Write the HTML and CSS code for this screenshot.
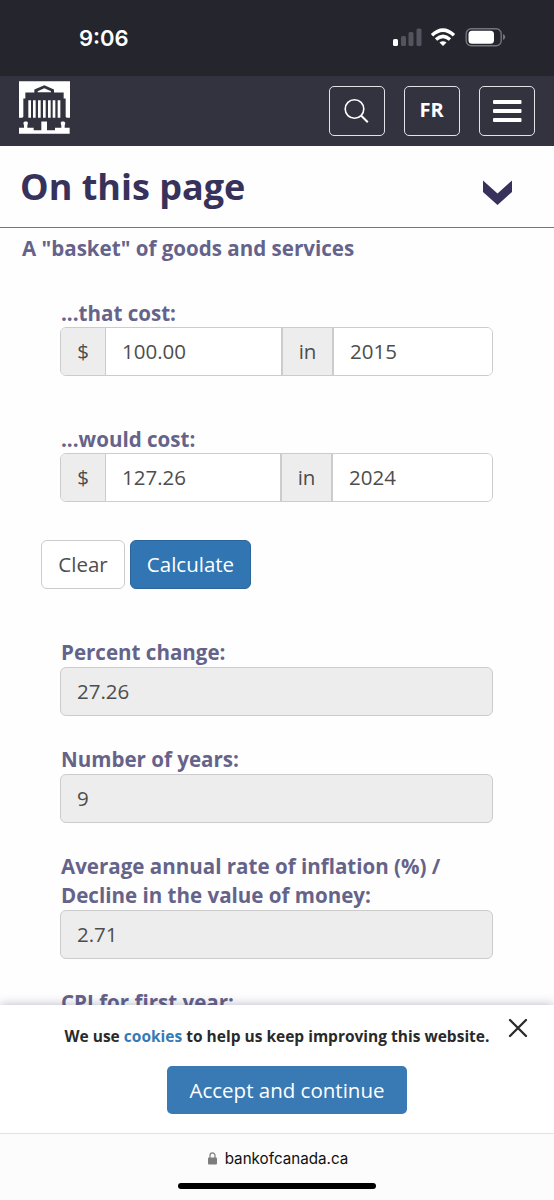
FILE: index.html
```html
<!doctype html>
<html lang="en">

<head>
    <meta charset="UTF-8" />
    <meta name="viewport" content="width=device-width, initial-scale=1.0" />
    <title>Inflation Calculator - Bank of Canada</title>
    <link rel="stylesheet" href="styles.css">
</head>

<body>
    <div class="status-bar">
        <span class="clock">9:06</span>
        <svg class="status-icons" width="114" height="20" viewBox="0 0 114 20">
            <g fill="#fff">
                <rect x="1" y="11" width="5" height="7" rx="1.5" />
                <g fill="#54545e">
                    <rect x="9" y="8" width="5" height="10" rx="1.5" />
                    <rect x="16.5" y="4" width="5" height="14" rx="1.5" />
                    <rect x="24.500" y="0.500" width="5" height="17.500" rx="1.5" />
                </g>
                <path d="M51 18l-3.500-3.500q3.500-2.700 7 0z" />
            </g>
            <g fill="none" stroke="#fff" stroke-width="3.400">
                <path d="M40 7.300q11-10.300 22 0" />
                <path d="M44 11.600q7-6.400 14 0" />
            </g>
            <rect x="74.200" y="0.700" width="35" height="17" rx="5" fill="none" stroke="#74747d" stroke-width="1.400" />
            <rect x="76.500" y="2.700" width="25.500" height="13" rx="3.500" fill="#fff" />
            <path d="M111 6q2.300 1 2.300 3t-2.300 3z" fill="#74747d" />
        </svg>
    </div>

    <header class="site-header">
        <svg class="logo" width="51" height="53" viewBox="0 0 153 158">
            <path fill="#fff" d="M0 0h153v110h-10l-3-3V52h-6V34h-29v-9L76 12 46 25v9H19v18h-6v55l-3 3H0z" />
            <path fill="#fff" d="M56 30l20-9 20 9v3H56z" />
            <path fill="#fff" d="M28 57h8v53h-8zM42 57h8v53h-8zM57 57h8v53h-8zM72 57h8v53h-8zM87 57h8v53h-8zM101 57h8v53h-8zM116 57h8v53h-8z" />
            <path fill="#fff" d="M0 140h15v-6l-2-9 4-4h7l3 4-2 9v6h19v7h23v-26h17v26h24v-7h19v-6l-2-9 3-4h7l4 4-2 9v6h15v18H0z" />
        </svg>
        <nav class="header-buttons">
            <button class="header-btn" aria-label="Search">
                <svg width="26" height="26" viewBox="0 0 26 26" fill="none" stroke="#fff" stroke-width="1.600">
                    <circle cx="10.500" cy="11" r="9.300" />
                    <path d="M17 17.500l6.800 6.800" stroke-width="2" />
                </svg>
            </button>
            <button class="header-btn lang">FR</button>
            <button class="header-btn" aria-label="Menu">
                <svg width="30" height="24" viewBox="0 0 30 24" fill="#fff">
                    <rect x="1" y="1" width="28.500" height="4" rx="1" />
                    <rect x="1" y="10" width="28.500" height="4" rx="1" />
                    <rect x="1" y="19" width="28.500" height="4" rx="1" />
                </svg>
            </button>
        </nav>
    </header>

    <div class="page-nav">
        <h2>On this page</h2>
        <svg width="30" height="25" viewBox="0 0 30 25">
            <path fill="#37325c" d="M1 0.500l14.500 13L30 0.500v11.500L15.500 25 1 12z" />
        </svg>
    </div>

    <main class="calculator">
        <h3>A "basket" of goods and services</h3>

        <div class="field cost">
            <label for="from-cost">...that cost:</label>
            <div class="input-group first">
                <span class="addon">$</span>
                <input id="from-cost" type="text" value="100.00">
                <span class="addon in">in</span>
                <input class="year" type="text" value="2015">
            </div>
        </div>

        <div class="field cost">
            <label for="to-cost">...would cost:</label>
            <div class="input-group second">
                <span class="addon">$</span>
                <input id="to-cost" type="text" value="127.26">
                <span class="addon in">in</span>
                <input class="year" type="text" value="2024">
            </div>
        </div>

        <div class="actions">
            <button class="btn">Clear</button>
            <button class="btn primary">Calculate</button>
        </div>

        <div class="field result">
            <label for="percent">Percent change:</label>
            <input id="percent" type="text" value="27.26" readonly>
        </div>
        <div class="field result">
            <label for="years">Number of years:</label>
            <input id="years" type="text" value="9" readonly>
        </div>
        <div class="field result">
            <label for="rate">Average annual rate of inflation (%) /<br>Decline in the value of money:</label>
            <input id="rate" type="text" value="2.71" readonly>
        </div>
        <div class="field result">
            <label for="cpi">CPI for first year:</label>
        </div>
    </main>

    <div class="cookie-bar">
        <p>We use <a>cookies</a> to help us keep improving this website.</p>
        <button class="accept">Accept and continue</button>
        <svg class="close" width="20" height="20" viewBox="0 0 20 20" stroke="#2a2a2a" stroke-width="2.300" stroke-linecap="round">
            <path d="M2 2l16 16M18 2L2 18" />
        </svg>
    </div>

    <footer class="browser-bar">
        <div class="address">
            <svg width="9" height="13" viewBox="0 0 9 13">
                <rect x="0" y="5.500" width="9" height="7" rx="1" fill="#7d7d7d" />
                <path d="M2 6V3.500a2.500 2.700 0 0 1 5 0V6" fill="none" stroke="#7d7d7d" stroke-width="1.200" />
            </svg>
            <span>bankofcanada.ca</span>
        </div>
        <div class="home-indicator"></div>
    </footer>
</body>

</html>
```
FILE: styles.css
```css
* {
    box-sizing: border-box;
}

body {
    margin: 0;
    height: 1200px;
    display: flex;
    flex-direction: column;
    overflow: hidden;
    background: #fefefe;
    font-family: "Open Sans", sans-serif;
    font-size: 20.5px;
    color: #4d4d4d;
}

button,
input {
    font-family: inherit;
    font-size: inherit;
    color: inherit;
}

.status-bar {
    flex: none;
    display: flex;
    justify-content: space-between;
    height: 76px;
    padding: 28px 48px 0 79px;
    background: #25252e;
}

.clock {
    font-family: Inter, sans-serif;
    font-size: 22px;
    font-weight: 600;
    line-height: 20px;
    color: #fff;
}

.site-header {
    flex: none;
    display: flex;
    justify-content: space-between;
    height: 70px;
    padding: 5px 19px 0;
    background: #33333f;
}

.header-buttons {
    display: flex;
    gap: 19px;
    padding-top: 5px;
}

.header-btn {
    display: flex;
    align-items: center;
    justify-content: center;
    width: 56px;
    height: 50px;
    padding: 0;
    border: 1.5px solid #e2e2e8;
    border-radius: 5px;
    background: none;
    color: #fff;
    font-weight: 700;
}

.header-btn.lang {
    padding: 0 1px 3px 0;
    font-size: 20px;
}

.page-nav {
    flex: none;
    display: flex;
    justify-content: space-between;
    height: 82px;
    padding: 0 42px 0 20px;
    border-bottom: 1px solid #777;
}

.page-nav h2 {
    margin: 0;
    font-size: 36px;
    line-height: 82px;
    color: #37325c;
}

.page-nav svg {
    margin-top: 34px;
}

.calculator {
    flex: 1;
    min-height: 0;
    padding: 6px 61px 0 60px;
    overflow: hidden;
}

.calculator h3 {
    margin: 0 0 35px -38px;
    font-size: 20.55px;
    line-height: 29px;
    color: #65638a;
}

.field label {
    display: block;
    padding-left: 1px;
    line-height: 29px;
    font-size: 20.55px;
    font-weight: 700;
    color: #65638a;
}

.field.cost {
    margin-bottom: 48px;
}

.field.cost label {
    margin-bottom: -1px;
    padding-top: 1px;
}

.field input {
    display: block;
    width: 100%;
    height: 49px;
    padding: 0 16px 2px;
    border: 1.5px solid #ccc;
    border-radius: 6px;
    background: #fff;
}

.field input[readonly] {
    background: #ededed;
}

.input-group {
    display: grid;
    grid-template-columns: 45px 175px 53px 1fr;
    height: 49px;
    border: 1.5px solid #ccc;
    border-radius: 6px;
    overflow: hidden;
}

.input-group.second {
    grid-template-columns: 45px 174px 53px 1fr;
}

.input-group input {
    height: 100%;
    border: 0;
    border-radius: 0;
}

.addon {
    display: flex;
    align-items: center;
    justify-content: center;
    padding-bottom: 2px;
    border-right: 1px solid #ccc;
    background: #ededed;
}

.addon.in {
    border-left: 2px solid #ccc;
    border-right-width: 2px;
}

.actions {
    display: flex;
    gap: 5px;
    margin: -10px 0 49px -19px;
}

.btn {
    width: 84px;
    height: 49px;
    padding: 0 0 1px;
    border: 1.5px solid #ccc;
    border-radius: 6px;
    background: #fff;
}

.btn.primary {
    width: 121px;
    border-color: #2c659c;
    background: #3175b2;
    color: #fff;
}

.field.result {
    margin-bottom: 29px;
}

.cookie-bar {
    position: relative;
    flex: none;
    display: flex;
    flex-direction: column;
    align-items: center;
    height: 128px;
    padding-top: 20px;
    background: #fff;
    box-shadow: 0 0 10px rgba(50, 50, 100, 0.35);
}

.cookie-bar p {
    margin: 0 0 19px;
    font-size: 15.5px;
    font-weight: 700;
    line-height: 22px;
    color: #2a2a2a;
}

.cookie-bar a {
    color: #3579b7;
}

.accept {
    width: 240px;
    height: 48px;
    margin-left: 20px;
    padding: 0;
    border: 0;
    border-radius: 5px;
    background: #397ab4;
    color: #fff;
}

.close {
    position: absolute;
    top: 13px;
    right: 26px;
}

/* sits above the cookie bar so its shadow only shows on top */
.browser-bar {
    position: relative;
    flex: none;
    display: flex;
    flex-direction: column;
    align-items: center;
    height: 67px;
    border-top: 1px solid #e2e2e5;
    background: #fcfcfc;
}

.address {
    display: flex;
    align-items: center;
    gap: 8px;
    height: 49px;
    margin-left: 2px;
    font-family: Inter, sans-serif;
    font-size: 15.2px;
    color: #111;
}

.home-indicator {
    width: 198px;
    height: 6px;
    border-radius: 3px;
    background: #000;
}
```
